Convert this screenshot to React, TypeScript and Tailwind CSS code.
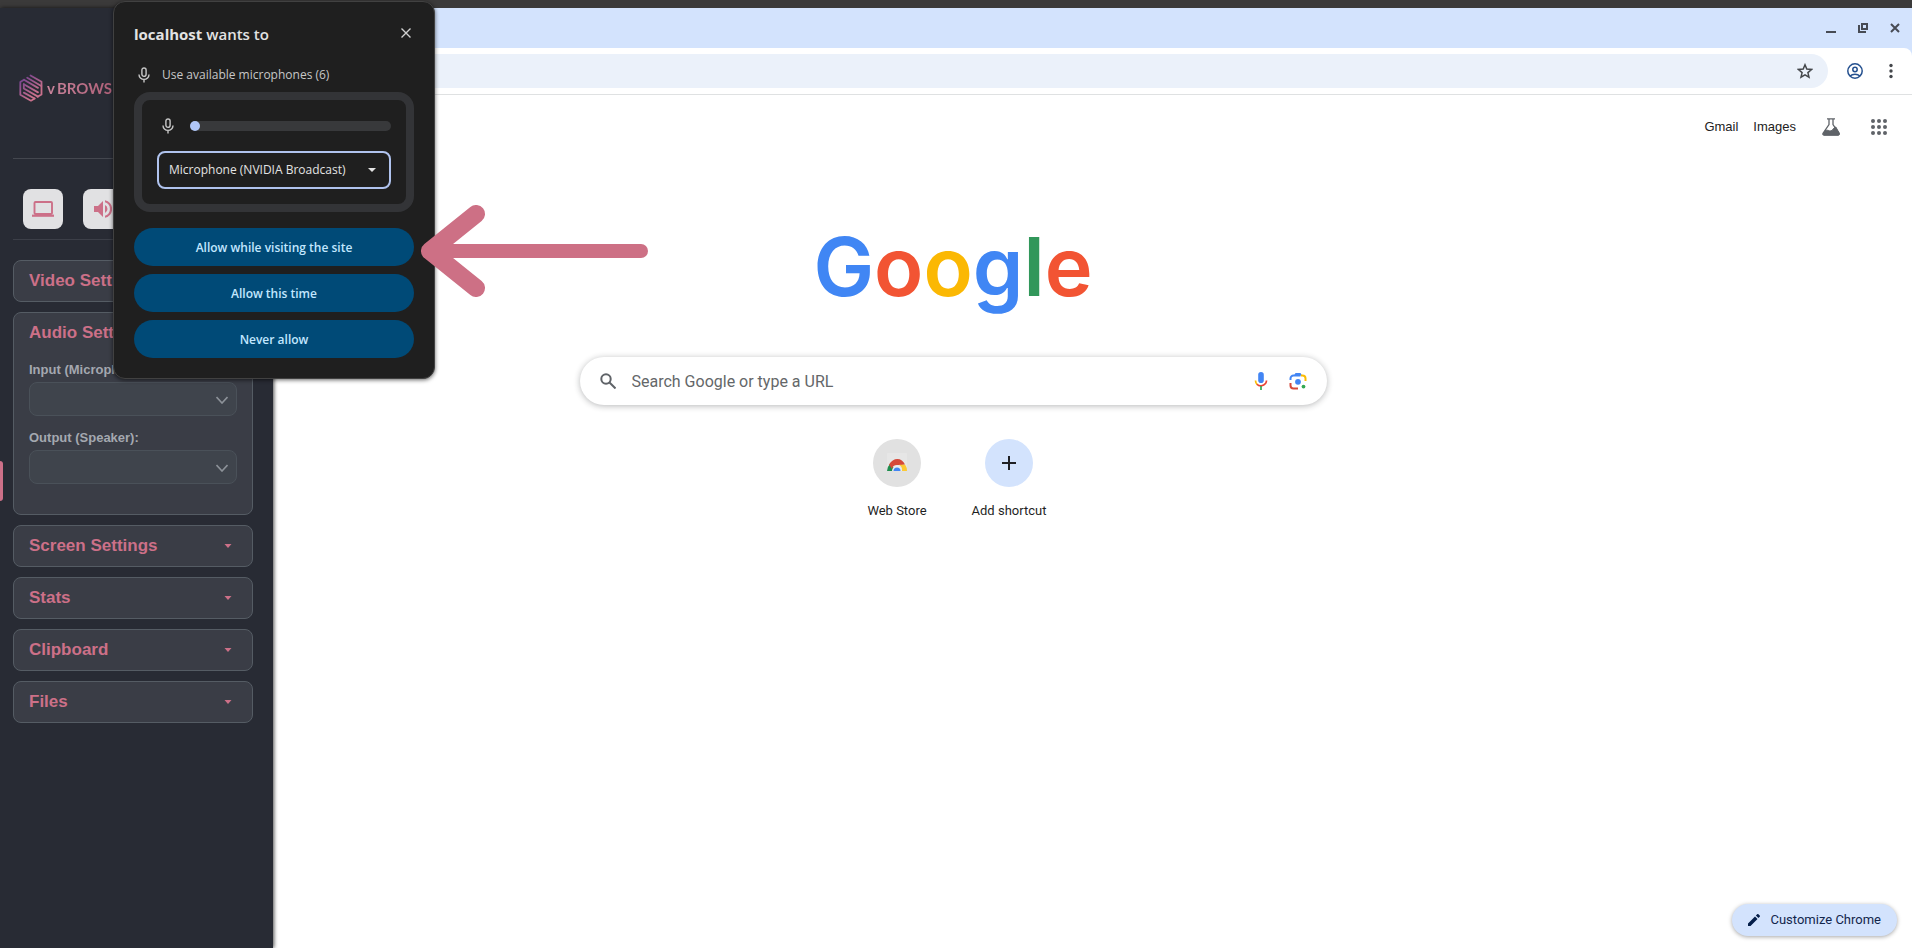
import React, { useState } from 'react';

interface CardProps {
    title: string;
    isOpen?: boolean;
    onToggle: () => void;
    children?: React.ReactNode;
}

const MicOutlineIcon: React.FC = () => (
    <svg viewBox="0 0 12 16" className="w-3 h-4 shrink-0" fill="none" stroke="#c7c7c7" strokeWidth="1.4">
        <rect x="3.9" y="1" width="4.2" height="8.4" rx="2.1" />
        <path d="M1 7.4a5 5 0 0 0 10 0M6 12.4V15.5" />
    </svg>
);

const VBrowserMark: React.FC = () => (
    <svg viewBox="0 0 24 28" className="w-6 h-7 shrink-0" fill="none" strokeWidth="1.8" strokeLinecap="round" strokeLinejoin="round">
        <defs>
            <linearGradient id="mark" x1="0" y1="0" x2="24" y2="28" gradientUnits="userSpaceOnUse">
                <stop offset="0.1" stopColor="#70408f" />
                <stop offset="0.7" stopColor="#c9708c" />
            </linearGradient>
        </defs>
        <g stroke="url(#mark)">
            <path d="M11.500 1.500 22.500 7.800V20.500L18.500 22.800" />
            <path d="M8.200 3.800 22.300 12" />
            <path d="M5 5.800 19 13.900" />
            <path d="M5 5.800 1.300 8V20.800L12 26.700 15.600 24.500" />
            <path d="M4.800 10.200 19 18.400" />
            <path d="M4.800 10.200V14.500L19 22.600" />
            <path d="M4.800 18.600 15.600 24.500" />
        </g>
    </svg>
);

const SettingsCard: React.FC<CardProps> = ({ title, isOpen = false, onToggle, children }) => (
    <section className="rounded-lg border border-[#555c64] bg-[#3a3d46]">
        <button
            type="button"
            aria-expanded={isOpen}
            onClick={onToggle}
            className="flex h-10 w-full items-center justify-between pl-[15px] pr-5 text-left text-[17px] font-bold text-[#cc7088]"
        >
            {title}
            {!isOpen && (
                <svg viewBox="0 0 8 4" className="w-2 h-1" fill="#cc7088">
                    <path d="M.5 0h7L4 4z" />
                </svg>
            )}
        </button>
        {isOpen && children}
    </section>
);

const DeviceSelect: React.FC<{ id: string; label: string }> = ({ id, label }) => (
    <div>
        <label htmlFor={id} className="block text-[13px] leading-5 font-bold text-[#a4a8b0]">{label}</label>
        <div className="relative mt-0.5">
            <select id={id} className="block h-[34px] w-full appearance-none rounded-lg border border-[#4a5159] bg-[#3f444c]" />
            <svg viewBox="0 0 12 8" className="pointer-events-none absolute right-[9px] top-3.5 h-2 w-3" fill="none" stroke="#8d9299" strokeWidth="1.6">
                <path d="M.5 1 6 7l5.500-6" />
            </svg>
        </div>
    </div>
);

const Sidebar: React.FC = () => {
    const [open, setOpen] = useState('Audio Settings');
    const toggle = (name: string) => setOpen(open === name ? '' : name);

    return (
        <aside className="absolute inset-y-0 left-0 z-10 w-[273px] bg-[#282b34] pl-[13px] pr-5 shadow-[1px_0_4px_rgba(0,0,0,0.7)] font-['Liberation_Sans',sans-serif]">
            <div className="absolute left-0 top-[453px] h-10 w-[3px] rounded-r bg-[#cc7088]" />
            <div className="flex h-[151px] items-start gap-1 border-b border-[#44474f] pl-1.5 pt-[66px]">
                <VBrowserMark />
                <span className="flex gap-0.5 bg-gradient-to-r from-[#c9849c] to-[#a8566e] bg-clip-text font-['Lato',sans-serif] text-[15px] leading-7 font-bold text-transparent">
                    <span>v</span>
                    <span>BROWSER</span>
                </span>
            </div>
            <div className="flex h-[81px] items-end gap-5 border-b border-[#3c3f48] px-2.5 pb-2.5">
                <button type="button" aria-label="Screen" className="flex size-10 items-center justify-center rounded-lg bg-[#e1e1e3]">
                    <svg viewBox="0 0 22 16" className="h-4 w-[22px]" fill="none" stroke="#cc7088">
                        <rect x="2.500" y="1" width="17.500" height="12" rx="1" strokeWidth="1.900" />
                        <path d="M0 14.700h22" strokeWidth="2.200" />
                    </svg>
                </button>
                <button type="button" aria-label="Sound" className="flex size-10 items-center justify-center rounded-lg bg-[#e1e1e3]">
                    <svg viewBox="0 0 18 18" className="size-[18px]" fill="#cc7088">
                        <path d="M0 6v6h4l5 5V1L4 6zM13.500 9A4.500 4.500 0 0 0 11 5v8a4.500 4.500 0 0 0 2.500-4zM11 .2v2.100a7 7 0 0 1 0 13.400v2.100a9 9 0 0 0 0-17.600z" />
                    </svg>
                </button>
            </div>
            <div className="mt-5 flex flex-col gap-2.5">
                <SettingsCard title="Video Settings" isOpen={open === 'Video Settings'} onToggle={() => toggle('Video Settings')} />
                <SettingsCard title="Audio Settings" isOpen={open === 'Audio Settings'} onToggle={() => toggle('Audio Settings')}>
                    <div className="flex flex-col gap-3 px-[15px] pb-[30px] pt-[7px]">
                        <DeviceSelect id="input" label="Input (Microphone):" />
                        <DeviceSelect id="output" label="Output (Speaker):" />
                    </div>
                </SettingsCard>
                {['Screen Settings', 'Stats', 'Clipboard', 'Files'].map(name => (
                    <SettingsCard key={name} title={name} isOpen={open === name} onToggle={() => toggle(name)} />
                ))}
            </div>
        </aside>
    );
};

const PermissionDialog: React.FC = () => (
    <div
        role="dialog"
        aria-labelledby="permission-title"
        className="absolute left-[113px] top-px z-20 w-[322px] rounded-xl border border-[#414141] bg-[#1f1f1f] px-5 pb-5 pt-5 text-[#e3e3e3] shadow-[0_1px_4px_rgba(0,0,0,0.6)] font-['Open_Sans',sans-serif]"
    >
        <div className="flex h-6 items-center justify-between pr-[3px]">
            <h2 id="permission-title" className="text-[15px] font-semibold">
                <span className="font-bold">localhost</span> wants to
            </h2>
            <button type="button" aria-label="Close" className="pb-0.5">
                <svg viewBox="0 0 10 10" className="size-2.5" stroke="#d0d0d0" strokeWidth="1.400">
                    <path d="m.5.5 9 9m0-9-9 9" />
                </svg>
            </button>
        </div>
        <div className="mt-[19px] flex h-5 items-center gap-3 pl-1 text-xs text-[#c7c7c7]">
            <MicOutlineIcon />
            Use available microphones (6)
        </div>
        <div className="mt-[7px] rounded-2xl border-8 border-[#333437] px-[15px] pb-[15px] pt-[17px]">
            <div className="flex h-[18px] items-center gap-4 pl-[5px]">
                <MicOutlineIcon />
                <div className="h-2.5 flex-1 rounded-full bg-[#38393b]">
                    <div className="size-2.5 rounded-full bg-[#b0c6f8]" />
                </div>
            </div>
            <div className="relative mt-4">
                <select
                    aria-label="Microphone"
                    className="block h-[38px] w-full appearance-none rounded-lg border-2 border-[#b0c3ee] bg-[#1f1f1f] pl-2.5 pr-8 text-xs text-[#e3e3e3]"
                >
                    <option>Microphone (NVIDIA Broadcast)</option>
                </select>
                <svg viewBox="0 0 8 4" className="pointer-events-none absolute right-[15px] top-[17px] h-1 w-2" fill="#e3e3e3">
                    <path d="M0 0h8L4 4z" />
                </svg>
            </div>
        </div>
        <div className="mt-4 flex flex-col gap-2">
            {['Allow while visiting the site', 'Allow this time', 'Never allow'].map(action => (
                <button key={action} type="button" className="h-[38px] rounded-full bg-[#004a77] pt-px text-xs font-semibold text-[#c2e7ff]">
                    {action}
                </button>
            ))}
        </div>
    </div>
);

const BrowserChrome: React.FC = () => (
    <header className="bg-[#d3e3fd]">
        <div className="flex h-10 items-center justify-end gap-[22px] pr-3 text-[#474b54]">
            <button type="button" aria-label="Minimize">
                <svg viewBox="0 0 10 10" className="size-2.5" stroke="currentColor" strokeWidth="2">
                    <path d="M0 9h10" />
                </svg>
            </button>
            <button type="button" aria-label="Restore">
                <svg viewBox="0 0 10 10" className="size-2.5" fill="none" stroke="currentColor" strokeWidth="2">
                    <path d="M4 1h5v5H4zM1 2v7h7" />
                </svg>
            </button>
            <button type="button" aria-label="Close window">
                <svg viewBox="0 0 10 10" className="size-2.5" stroke="currentColor" strokeWidth="2">
                    <path d="m1 1 8 8m0-8-8 8" />
                </svg>
            </button>
        </div>
        <div className="flex h-[47px] items-center rounded-t-lg border-b border-[#dfe1e2] bg-white pl-24 pr-[13px]">
            <div className="flex h-[34px] flex-1 items-center justify-end rounded-full bg-[#ebf1fa] pr-[15px]">
                <button type="button" aria-label="Bookmark">
                    <svg viewBox="0 0 16 16" className="size-4" fill="none" stroke="#44474b" strokeWidth="1.500">
                        <path d="m8 1.800 1.800 4.300 4.700.4L10.900 9.600 12 14.200 8 11.800 4 14.200 5.100 9.600 1.500 6.500l4.700-.4z" />
                    </svg>
                </button>
            </div>
            <button type="button" aria-label="Profile" className="ml-[19px]">
                <svg viewBox="0 0 16 16" className="size-4" fill="none" stroke="#24508f" strokeWidth="1.500">
                    <circle cx="8" cy="8" r="7.200" />
                    <circle cx="8" cy="6.500" r="2.200" />
                    <path d="M3 13c2.700-2.400 7.300-2.400 10 0" />
                </svg>
            </button>
            <button type="button" aria-label="Menu" className="ml-5">
                <svg viewBox="0 0 16 16" className="size-4" fill="#44474b">
                    <circle cx="8" cy="2.500" r="1.700" />
                    <circle cx="8" cy="8" r="1.700" />
                    <circle cx="8" cy="13.500" r="1.700" />
                </svg>
            </button>
        </div>
    </header>
);

const NewTabPage: React.FC = () => (
    <main className="relative flex flex-1 flex-col bg-white font-['Roboto',sans-serif]">
        <nav className="flex h-16 items-center justify-end pr-[25px] font-['Liberation_Sans',sans-serif] text-[13px] text-[#222]">
            <a href="#gmail">Gmail</a>
            <a href="#images" className="ml-[15px]">Images</a>
            <a href="#labs" aria-label="Labs" className="ml-[26px]">
                <svg viewBox="0 0 18 18" className="size-[18px]" fill="none" stroke="#5f6368">
                    <path d="M5 .8h8M7 .8v5.700L1.200 15c-.7 1.200 0 2.200 1 2.200h13.600c1 0 1.700-1 1-2.200L11 6.500V.8" strokeWidth="1.300" />
                    <path d="M3 12.700c2.500-1.500 4 .6 6 .2s2.500-3.600 4.800-3.900l3.400 6c.5 1 0 2-.8 2H2.200c-.8 0-1.300-.7-.8-1.700z" fill="#5f6368" />
                </svg>
            </a>
            <a href="#apps" aria-label="Google apps" className="ml-[31px]">
                <svg viewBox="0 0 16 16" className="size-4" fill="#5f6368">
                    {[2, 8, 14].map(y => [2, 8, 14].map(x => <circle key={`${x}-${y}`} cx={x} cy={y} r="2" />))}
                </svg>
            </a>
        </nav>
        <div className="flex flex-col items-center pr-1.5">
            <h1 className="mt-12 font-['Inter',sans-serif] text-[81px] leading-[120px] font-semibold">
                <span className="text-[#4086f4]">G</span>
                <span className="text-[#f25433]">o</span>
                <span className="text-[#fbb803]">o</span>
                <span className="text-[#4086f4]">g</span>
                <span className="text-[#31975a]">l</span>
                <span className="text-[#f25433]">e</span>
            </h1>
            <div className="mt-[30px] flex h-12 w-full max-w-[747px] items-center rounded-full bg-white px-5 shadow-[0_1px_6px_rgba(32,33,36,0.32)]">
                <svg viewBox="0 0 16 16" className="size-4 shrink-0" fill="none" stroke="#5f6368" strokeWidth="2">
                    <circle cx="6" cy="6" r="4.700" />
                    <path d="m9.500 9.500 6 6" />
                </svg>
                <input
                    type="text"
                    aria-label="Search"
                    placeholder="Search Google or type a URL"
                    className="ml-4 min-w-0 flex-1 bg-transparent pt-0.5 text-base text-[#202124] outline-none placeholder:text-[#646769]"
                />
                <button type="button" aria-label="Search by voice">
                    <svg viewBox="0 0 14 18" className="h-[18px] w-3.5" fill="none" strokeWidth="1.700">
                        <rect x="4.200" y="0" width="5.600" height="11" rx="2.800" fill="#4285f4" />
                        <path d="M1.500 8.500c0 2 .7 3.300 2 4.200" stroke="#fbbc04" />
                        <path d="M3 12.200c2 2.300 6.500 2.200 8.500-.6.600-.9 1-1.800 1-3.100" stroke="#ea4335" />
                        <path d="M7 14v4" stroke="#34a853" />
                    </svg>
                </button>
                <button type="button" aria-label="Search by image" className="ml-[21px]">
                    <svg viewBox="0 0 18 18" className="size-[18px]" fill="none" strokeWidth="2">
                        <path d="M1.500 8V6.500a3 3 0 0 1 3-3h7" stroke="#4285f4" />
                        <path d="M5 3.500 6.500 1h5L13 3.500z" fill="#4285f4" />
                        <path d="M12 3.500h1.500a3 3 0 0 1 3 3V9" stroke="#fbbc04" />
                        <path d="M1.500 11v2.500a3 3 0 0 0 3 3H9" stroke="#d5493a" />
                        <circle cx="9" cy="9.800" r="2.900" fill="#4285f4" />
                        <circle cx="14.500" cy="14.600" r="1.900" fill="#34a853" />
                    </svg>
                </button>
            </div>
            <div className="mt-[34px] flex text-[13px] text-[#1f1f1f]">
                <a href="#store" className="flex w-28 flex-col items-center gap-[15px]">
                    <span className="flex size-12 items-center justify-center rounded-full bg-[#e1e1e1]">
                        <svg viewBox="0 0 20 20" className="size-5">
                            <rect width="20" height="16" rx="1" fill="#e6e6e6" />
                            <path d="M0 18a10 10 0 0 1 3-7l4 4a4 4 0 0 0-1 3z" fill="#1e8e4e" />
                            <path d="M2 11.500C6 4 15 4 18 11.500l-3.500.5H10a5 5 0 0 0-5 4z" fill="#d5493a" />
                            <path d="M12 11.800h6.200A11 11 0 0 1 20 18h-5a6 6 0 0 0-3-6.200z" fill="#fcc934" />
                            <path d="M5 18a5 5 0 0 1 10 0z" fill="#eee" />
                            <path d="M6.500 18a3.500 3.500 0 0 1 7 0z" fill="#4285f4" />
                        </svg>
                    </span>
                    <span className="leading-[18px]">Web Store</span>
                </a>
                <button type="button" className="flex w-28 flex-col items-center gap-[15px]">
                    <span className="flex size-12 items-center justify-center rounded-full bg-[#d3e3fd]">
                        <svg viewBox="0 0 14 14" className="size-3.5" stroke="#1f2024" strokeWidth="2">
                            <path d="M7 0v14M0 7h14" />
                        </svg>
                    </span>
                    <span className="leading-[18px]">Add shortcut</span>
                </button>
            </div>
        </div>
        <button
            type="button"
            className="absolute bottom-3 right-[15px] flex h-8 items-center gap-2.5 rounded-full bg-[#d3e3fd] px-4 text-[13px] text-[#12264c] shadow-[0_1px_4px_rgba(0,0,0,0.35)]"
        >
            <svg viewBox="0 0 12 12" className="size-3" fill="#041e49">
                <path d="M0 9.500V12h2.500l7-7L7 2.500zM11.700 2.800c.4-.4.4-.9 0-1.200L10.400.3C10.100 0 9.600 0 9.200.3L7.900 1.600l2.500 2.500z" />
            </svg>
            Customize Chrome
        </button>
    </main>
);

const App: React.FC = () => (
    <div className="relative flex min-h-screen flex-col overflow-hidden bg-[#3b3a3a]">
        <div className="relative mt-2 flex flex-1 flex-col">
            <BrowserChrome />
            <NewTabPage />
            <Sidebar />
        </div>
        <PermissionDialog />
        {/* pointer towards the first permission button */}
        <svg viewBox="0 0 228 92" className="pointer-events-none absolute left-[421px] top-[205px] z-30 h-[92px] w-[228px]" fill="none" stroke="#cd7085" strokeLinecap="round" strokeLinejoin="round">
            <path d="M55 9 9 46l46 37" strokeWidth="18" />
            <path d="M9 46h211" strokeWidth="14" />
        </svg>
    </div>
);

export default App;
